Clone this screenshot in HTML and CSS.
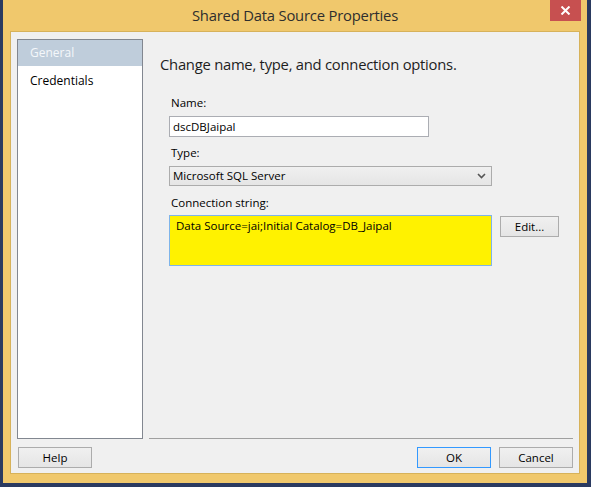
FILE: index.html
```html
<!DOCTYPE html>
<html>
<head>
<meta charset="utf-8">
<link rel="stylesheet" href="styles.css">
</head>
<body>
<div class="window">
  <div class="titlebar">
    <div class="title">Shared Data Source Properties</div>
    <div class="close">
      <svg width="11" height="9" viewBox="0 0 11 9"><path d="M1.5 0.5 L9.5 8.5 M9.5 0.5 L1.5 8.5" stroke="#fff" stroke-width="2"/></svg>
    </div>
  </div>
  <div class="content">
    <div class="top">
      <div class="list">
        <div class="item selected">General</div>
        <div class="item second">Credentials</div>
      </div>
      <div class="main">
        <div class="heading">Change name, type, and connection options.</div>
        <div class="label lbl-name">Name:</div>
        <div class="input">dscDBJaipal</div>
        <div class="label lbl-type">Type:</div>
        <div class="select">
          <span>Microsoft SQL Server</span>
          <svg width="9" height="6" viewBox="0 0 9 6"><path d="M1 1 L4.5 4.5 L8 1" fill="none" stroke="#555" stroke-width="1.6"/></svg>
        </div>
        <div class="label lbl-conn">Connection string:</div>
        <div class="conn-row">
          <div class="textarea">Data Source=jai;Initial Catalog=DB_Jaipal</div>
          <div class="btn edit">Edit...</div>
        </div>
      </div>
    </div>
    <div class="bottom">
      <div class="btn help">Help</div>
      <div class="spacer"></div>
      <div class="btn ok">OK</div>
      <div class="btn cancel">Cancel</div>
    </div>
  </div>
</div>
</body>
</html>
```
FILE: styles.css
```css
* { box-sizing: border-box; }
html, body { margin: 0; padding: 0; }
body {
  width: 591px;
  height: 487px;
  background: #2a3a60;
  padding: 0 4px 4px 3px;
  font-family: "Open Sans", "Noto Sans", sans-serif;
  color: #000;
  overflow: hidden;
}
.window {
  width: 584px;
  height: 483px;
  background: #f0c86c;
  display: flex;
  flex-direction: column;
  padding: 0 7px 9px 7px;
}
.titlebar {
  height: 31px;
  position: relative;
  display: flex;
  justify-content: center;
}
.title {
  font-size: 14.8px;
  color: #2e2e2e;
  padding-top: 5px;
  letter-spacing: -0.2px;
}
.close {
  position: absolute;
  top: 0;
  right: -1px;
  width: 31px;
  height: 21px;
  background: #c75050;
  display: flex;
  align-items: center;
  justify-content: center;
}
.content {
  flex: 1;
  background: #f0f0f0;
  border: 1px solid #d7b25a;
  padding: 7px 6px 5px 6px;
  display: flex;
  flex-direction: column;
}
.top {
  display: flex;
  gap: 6px;
  height: 400px;
}
.list {
  width: 126px;
  height: 400px;
  background: #fff;
  border: 1px solid #828790;
}
.item {
  height: 26px;
  font-size: 12px;
  padding-left: 12px;
  line-height: 26px;
}
.item.second {
  line-height: 30px;
}
.item.selected {
  background: #bfcddb;
  color: #f4f7fa;
}
.main {
  flex: 1;
  height: 400px;
  border-bottom: 1px solid #a0a0a0;
  margin-bottom: 1px;
  padding-left: 20px;
  display: flex;
  flex-direction: column;
  align-items: flex-start;
}
.heading {
  font-size: 14.8px;
  margin-left: -9px;
  margin-top: 15px;
  line-height: 20px;
  color: #1e1e1e;
  letter-spacing: -0.25px;
}
.label {
  font-size: 11.5px;
  line-height: 16px;
  margin-left: 2px;
  color: #000;
}
.lbl-name { margin-top: 21px; }
.lbl-type { margin-top: 8px; }
.lbl-conn { margin-top: 9px; }
.input {
  margin-top: 5px;
  width: 260px;
  height: 21px;
  background: #fff;
  border: 1px solid #abadb3;
  font-size: 11.5px;
  line-height: 19px;
  padding-left: 3px;
}
.select {
  margin-top: 5px;
  width: 323px;
  height: 20px;
  border: 1px solid #acacac;
  background: linear-gradient(#f0f0f0, #e5e5e5);
  font-size: 11.5px;
  line-height: 18px;
  padding-left: 3px;
  padding-right: 5px;
  display: flex;
  justify-content: space-between;
  align-items: center;
}
.conn-row {
  margin-top: 4px;
  display: flex;
  align-items: flex-start;
  gap: 8px;
}
.textarea {
  width: 323px;
  height: 51px;
  background: #fff200;
  border: 1px solid #7eb4ea;
  font-size: 11.5px;
  line-height: 18px;
  padding-left: 6px;
  padding-top: 1px;
}
.btn {
  height: 21px;
  border: 1px solid #acacac;
  background: linear-gradient(#f0f0f0, #e5e5e5);
  font-size: 11.5px;
  line-height: 19px;
  text-align: center;
}
.edit {
  width: 59px;
  margin-top: 1px;
}
.bottom {
  margin-top: 8px;
  display: flex;
  gap: 8px;
  padding-left: 1px;
}
.spacer { flex: 1; }
.help, .ok, .cancel { width: 74px; }
.ok { border-color: #3399ff; }
```
